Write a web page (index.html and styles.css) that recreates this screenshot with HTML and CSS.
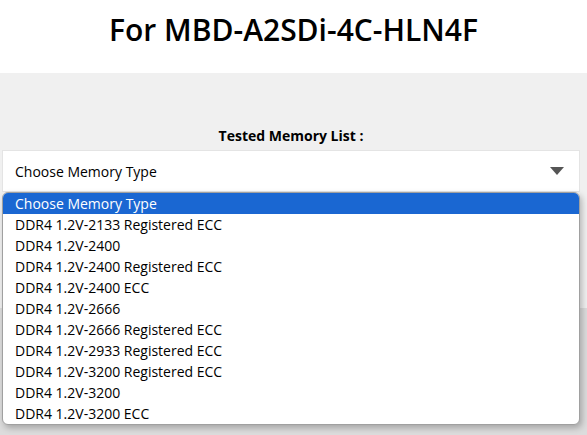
FILE: index.html
```html
<!DOCTYPE html>
<html lang="en">
<head>
  <meta charset="UTF-8">
  <meta name="viewport" content="width=device-width, initial-scale=1.0">
  <title>Tested Memory List</title>
  <link rel="stylesheet" href="styles.css">
</head>
<body>
  <header class="page-head">
    <h1>For MBD-A2SDi-4C-HLN4F</h1>
  </header>

  <main class="memory">
    <div class="memory-top">
      <label class="memory-label" for="memory-type">Tested Memory List :</label>
      <div class="select-box" id="memory-type">
        <span>Choose Memory Type</span>
        <span class="select-arrow"></span>
      </div>
    </div>
    <div class="memory-bottom"></div>

    <ul class="dropdown">
      <li class="selected">Choose Memory Type</li>
      <li>DDR4 1.2V-2133 Registered ECC</li>
      <li>DDR4 1.2V-2400</li>
      <li>DDR4 1.2V-2400 Registered ECC</li>
      <li>DDR4 1.2V-2400 ECC</li>
      <li>DDR4 1.2V-2666</li>
      <li>DDR4 1.2V-2666 Registered ECC</li>
      <li>DDR4 1.2V-2933 Registered ECC</li>
      <li>DDR4 1.2V-3200 Registered ECC</li>
      <li>DDR4 1.2V-3200</li>
      <li>DDR4 1.2V-3200 ECC</li>
    </ul>
  </main>
</body>
</html>
```

FILE: styles.css
```css
body {
  font-family: "Open Sans", "Noto Sans", sans-serif;
  color: #000;
  background-color: #fff;
  margin: 0;
  padding: 0;
}
.page-head {
  height: 73px;
  display: flex;
  justify-content: center;
  align-items: center;
}
.page-head h1 {
  margin: 0 0 14px;
  font-size: 30px;
  font-weight: 600;
}
.memory {
  position: relative;
  background: #f0f0f0;
  height: 362px;
  display: flex;
  flex-direction: column;
}
.memory-top {
  padding: 53px 7px 0 2px;
  height: 182px;
}
.memory-label {
  display: block;
  text-align: center;
  font-size: 14px;
  font-weight: 700;
  line-height: 20px;
  margin-bottom: 4px;
}
.select-box {
  height: 40px;
  background: #fff;
  border: 1px solid #e4e4e4;
  display: flex;
  align-items: center;
  justify-content: space-between;
  padding: 0 15px 0 12px;
  font-size: 14px;
}
.select-arrow {
  width: 0;
  height: 0;
  border-left: 7px solid transparent;
  border-right: 7px solid transparent;
  border-top: 8px solid #555;
}
.memory-bottom {
  flex: 1;
  background: #dcdcdc;
}
.dropdown {
  position: absolute;
  top: 119px;
  left: 2px;
  width: 576px;
  margin: 0;
  padding: 0;
  list-style: none;
  background: #fff;
  border: 1px solid #a0a0a0;
  border-radius: 6px;
  box-shadow: 2px 3px 6px rgba(0, 0, 0, 0.25);
  overflow: hidden;
}
.dropdown li {
  height: 21px;
  line-height: 21px;
  padding: 0 12px;
  font-size: 14px;
}
.dropdown li.selected {
  background: #1a67d2;
  color: #fff;
}
```
